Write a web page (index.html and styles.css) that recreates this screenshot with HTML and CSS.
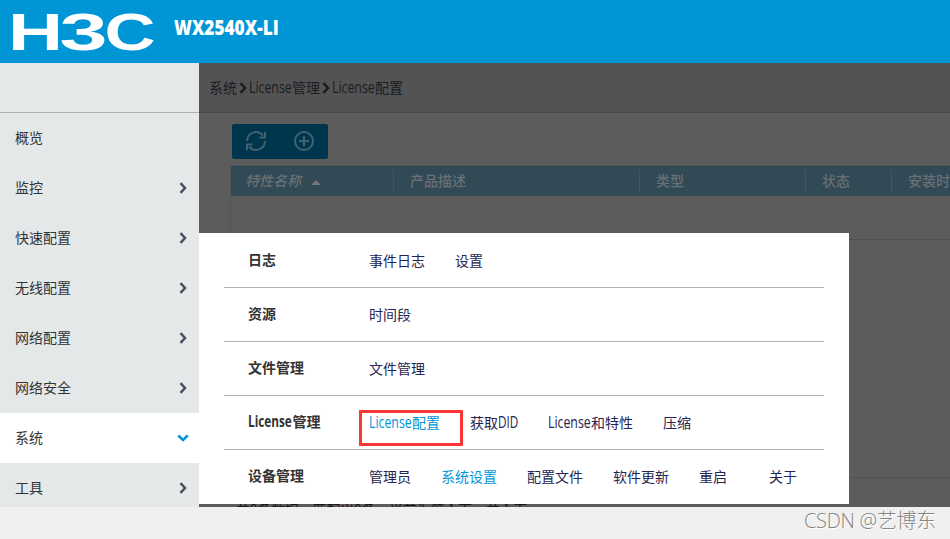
FILE: index.html
```html
<!DOCTYPE html>
<html lang="zh-CN">
<head>
<meta charset="utf-8">
<title>WX2540X-LI</title>
<link rel="stylesheet" href="styles.css">
</head>
<body>
<svg width="0" height="0" class="defs">
  <symbol id="chev" viewBox="0 0 8 12"><path d="M1.5 1.2 6 6 1.5 10.8" fill="none" stroke="currentColor" stroke-width="2.5"/></symbol>
</svg>
<header class="top">
  <svg class="logo" width="145" height="40" viewBox="0 0 145 40" aria-label="H3C">
    <text x="-3" y="38" textLength="55" lengthAdjust="spacingAndGlyphs">H</text>
    <text x="48.500" y="37.500" textLength="48" lengthAdjust="spacingAndGlyphs">3</text>
    <text x="93.500" y="37.500" textLength="51" lengthAdjust="spacingAndGlyphs">C</text>
  </svg>
  <h1 class="model"><span>WX2540X-LI</span></h1>
</header>
<div class="main">
  <nav class="side">
    <div class="side-head"></div>
    <a class="item">概览</a>
    <a class="item">监控<svg><use href="#chev"/></svg></a>
    <a class="item">快速配置<svg><use href="#chev"/></svg></a>
    <a class="item">无线配置<svg><use href="#chev"/></svg></a>
    <a class="item">网络配置<svg><use href="#chev"/></svg></a>
    <a class="item">网络安全<svg><use href="#chev"/></svg></a>
    <a class="item active">系统<svg><use href="#chev"/></svg></a>
    <a class="item">工具<svg><use href="#chev"/></svg></a>
  </nav>
  <section class="content">
    <div class="crumbs">系统<svg><use href="#chev"/></svg><span class="lat"><i>License</i></span>管理<svg><use href="#chev"/></svg><span class="lat"><i>License</i></span>配置</div>
    <div class="toolbar">
      <svg width="22" height="22" viewBox="0 0 22 22" fill="none" stroke="currentColor" stroke-width="2"><path d="M2 11a9 9 0 0 1 16-5.500M20 11a9 9 0 0 1-16 5.500"/><path d="M20 2v5.500h-5.500M2 20v-5.500h5.500"/></svg>
      <svg width="22" height="22" viewBox="0 0 22 22" fill="none" stroke="currentColor" stroke-width="2"><circle cx="11" cy="11" r="9"/><path d="M11 6v10M6 11h10"/></svg>
    </div>
    <div class="table">
      <div class="thead">
        <div class="th sorted"><em>特性名称</em><b class="up"></b></div>
        <div class="th">产品描述</div>
        <div class="th">类型</div>
        <div class="th">状态</div>
        <div class="th">安装时间</div>
      </div>
      <div class="tbody"></div>
    </div>
    <div class="pager"><span>共0条数据，</span><span>匹配出0条。</span><span>当前为第 1 页，</span><span>共 1 页</span></div>
  </section>
</div>
<div class="mega">
  <div class="row"><h2>日志</h2><div class="links"><a>事件日志</a><a>设置</a></div></div>
  <div class="row"><h2>资源</h2><div class="links"><a>时间段</a></div></div>
  <div class="row"><h2>文件管理</h2><div class="links"><a>文件管理</a></div></div>
  <div class="row"><h2><span class="lat"><i>License</i></span>管理</h2><div class="links"><a class="hot"><span class="lat"><i>License</i></span>配置<b class="mark"></b></a><a>获取<span class="lat did"><i>DID</i></span></a><a><span class="lat"><i>License</i></span>和特性</a><a>压缩</a></div></div>
  <div class="row"><h2>设备管理</h2><div class="links"><a>管理员</a><a class="hot">系统设置</a><a>配置文件</a><a>软件更新</a><a>重启</a><a class="about">关于</a></div></div>
</div>
<footer class="foot">CSDN @艺博东</footer>
</body>
</html>
```
FILE: styles.css
```css
* { box-sizing: border-box; }
body {
  margin: 0;
  width: 950px;
  height: 539px;
  overflow: hidden;
  display: flex;
  flex-direction: column;
  background: #f0f0f0;
  color: #333;
  font: 14px/20px "Noto Sans CJK SC", sans-serif;
}
.defs { position: absolute; }
.top { height: 63px; flex: none; display: flex; background: #0096d6; color: #fff; }
.logo { margin: 12px 0 0 11px; overflow: visible; flex: none; }
.logo text { font: bold 51px "Liberation Sans", sans-serif; fill: #fff; }
.model { margin: 14px 0 0 18px; width: 106px; font: 800 21px/26px "Open Sans", sans-serif; white-space: nowrap; }
.model span { display: inline-block; transform: scaleX(.82); transform-origin: 0 50%; }
.main { display: flex; height: 444px; flex: none; overflow: hidden; }
.side { width: 199px; flex: none; background: #e4e8e8; }
.side-head { height: 50px; border-bottom: 1px solid #aeb0b1; }
.item { height: 50px; padding: 0 12px 2px 15px; display: flex; align-items: center; justify-content: space-between; }
.item svg, .crumbs svg { width: 8px; height: 12px; color: #4c4d63; position: relative; top: 1px; }
.item.active { background: #fff; }
.item.active svg { color: #0096d6; transform: rotate(90deg); }
.content { flex: 1; min-width: 0; overflow: hidden; background: #5c5c5c; }
.crumbs { height: 50px; padding: 0 0 2px 10px; display: flex; align-items: center; background: #535353; border-bottom: 1px solid #494949; color: #1c1c24; }
.crumbs svg { margin: 0 2px; color: #1c1c24; }
.lat { display: inline-block; width: 43px; height: 20px; padding-top: 1px; vertical-align: top; font-family: "Open Sans", sans-serif; white-space: nowrap; }
.lat i { display: inline-block; font-style: normal; transform: scale(.88, 1.1); transform-origin: 0 60%; }
h2 .lat { width: 44.500px; }
h2 .lat i { transform: scale(.84, 1.1); }
.lat.did { width: 20px; }
.lat.did i { transform: scale(.84, 1.1); }
.toolbar { margin: 11px 0 0 33px; width: 96px; height: 35px; display: flex; align-items: center; justify-content: space-around; border-radius: 2px; background: #00364d; color: #40616e; }
.toolbar svg { position: relative; top: -1px; }
.table { margin: 6px 0 0 31px; border: 1px solid #535353; border-right: 0; width: 760px; }
.thead { height: 30px; display: flex; background: #314a55; color: #697175; font-weight: 500; }
.th { flex: none; height: 30px; padding-left: 17px; line-height: 28px; background: linear-gradient(#514f50, #514f50) 0 3px / 1px 24px no-repeat; }
.th:nth-child(1) { width: 162px; padding-left: 14px; background: none; }
.th:nth-child(2) { width: 246px; }
.th:nth-child(3) { width: 166px; }
.th:nth-child(4) { width: 86px; }
.th:nth-child(5) { width: 100px; }
.up { display: inline-block; margin-left: 10px; border: 5px solid transparent; border-top: 0; border-bottom-color: #737678; position: relative; top: -1px; }
.th em { display: inline-block; }
.tbody { height: 43px; }
.pager { margin-top: 237px; height: 29px; padding: 21px 0 0 37px; border-top: 1px solid #535353; display: flex; color: #15151c; white-space: nowrap; font-size: 13.800px; }
.mega { position: absolute; left: 199px; top: 233px; width: 650px; height: 271px; padding: 1px 25px 0; background: #fff; }
.row { height: 54px; padding-left: 24px; display: flex; border-bottom: 1px solid #b0b0b0; }
.row:last-child { border: 0; }
.row h2 { margin: 15px 0 0; width: 121px; font-size: 14px; line-height: 20px; font-weight: 700; }
.links { margin-top: 16px; display: flex; gap: 30px; white-space: nowrap; color: #262451; }
.links a { position: relative; }
.links .hot { color: #0096d6; }
.links .about { margin-left: 12px; }
.mark { position: absolute; left: -10px; top: -2px; width: 104px; height: 36px; border: 3px solid #fb3636; }
.foot { flex: 1; padding: 0 14px 0 0; text-align: right; font: 300 20px/28px "Open Sans", "Noto Sans CJK SC", sans-serif; color: #858585; letter-spacing: -.3px; text-shadow: 1px 1px #fff; }
```
